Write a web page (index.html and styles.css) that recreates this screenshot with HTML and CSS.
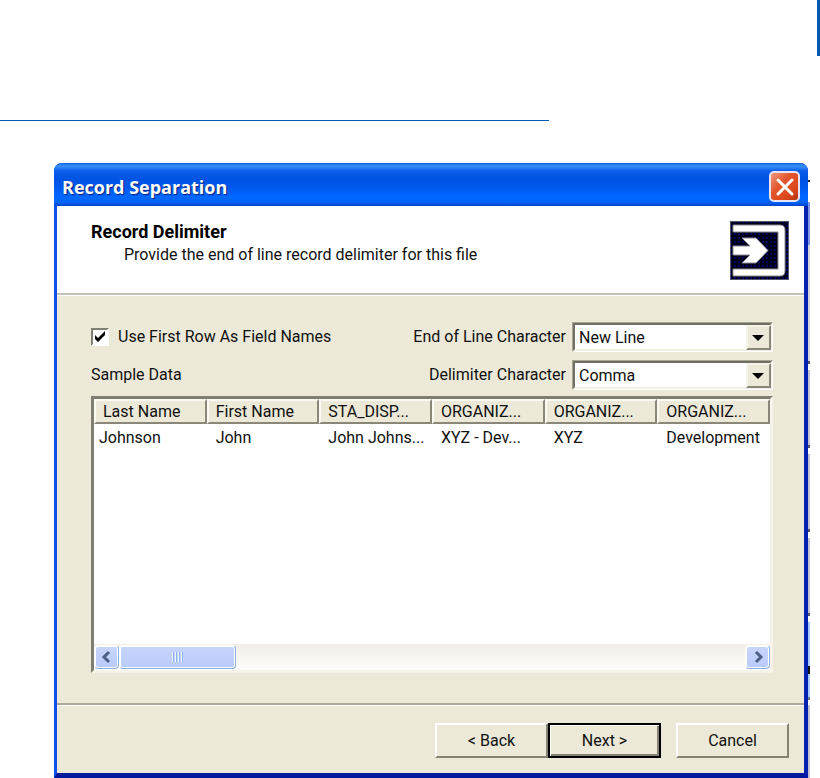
FILE: index.html
```html
<!DOCTYPE html>
<html lang="en">
<head>
  <meta charset="UTF-8">
  <meta name="viewport" content="width=device-width, initial-scale=1.0">
  <title>Record Separation</title>
  <link rel="stylesheet" href="styles.css">
</head>
<body>
  <header class="page-header"></header>
  <hr class="page-rule">

  <main class="window">
    <div class="titlebar">
      <h1>Record Separation</h1>
      <button class="close" type="button" aria-label="Close">
        <svg viewBox="0 0 24 24" width="24" height="24" aria-hidden="true">
          <path d="M5 5L19 19M19 5L5 19" fill="none" stroke="#fff" stroke-width="3" stroke-linecap="round"/>
        </svg>
      </button>
    </div>

    <form class="dialog">
      <div class="intro">
        <div class="intro-text">
          <h2>Record Delimiter</h2>
          <p>Provide the end of line record delimiter for this file</p>
        </div>
        <svg class="intro-icon" viewBox="0 0 59 59" width="59" height="59" aria-hidden="true">
          <defs>
            <pattern id="dots" width="4" height="4" patternUnits="userSpaceOnUse">
              <rect width="4" height="4" fill="#000018"/>
              <rect width="2" height="2" fill="#00005a"/>
            </pattern>
          </defs>
          <rect width="59" height="59" fill="url(#dots)"/>
          <rect x="0.5" y="0.5" width="58" height="58" fill="none" stroke="#55556a"/>
          <path d="M3 4H50Q55 4 55 9V50Q55 55 50 55H3V48H48V11H3Z" fill="#fff" stroke="#8a8a94"/>
          <path d="M3 25H20L12 17H26L38 29.500L26 42H12L20 34H3Z" fill="#fff" stroke="#8a8a94"/>
        </svg>
      </div>

      <div class="content">
        <div class="options">
          <div class="options-left">
            <label class="check"><input type="checkbox" checked> Use First Row As Field Names</label>
            <span id="sample-label">Sample Data</span>
          </div>
          <div class="options-right">
            <div class="field">
              <label for="eol">End of Line Character</label>
              <div class="combo">
                <select id="eol"><option>New Line</option></select>
              </div>
            </div>
            <div class="field">
              <label for="delimiter">Delimiter Character</label>
              <div class="combo">
                <select id="delimiter"><option>Comma</option></select>
              </div>
            </div>
          </div>
        </div>

        <div class="list">
          <table aria-labelledby="sample-label">
            <thead>
              <tr>
                <th>Last Name</th>
                <th>First Name</th>
                <th>STA_DISP...</th>
                <th>ORGANIZ...</th>
                <th>ORGANIZ...</th>
                <th>ORGANIZ...</th>
              </tr>
            </thead>
            <tbody>
              <tr>
                <td>Johnson</td>
                <td>John</td>
                <td>John Johns...</td>
                <td>XYZ - Dev...</td>
                <td>XYZ</td>
                <td>Development</td>
              </tr>
            </tbody>
          </table>
          <div class="scrollbar">
            <button class="scroll-btn" type="button" aria-label="Scroll left">
              <svg viewBox="0 0 12 14" width="12" height="14" aria-hidden="true"><path d="M8 2L3 7L8 12" fill="none" stroke="#4d6185" stroke-width="3"/></svg>
            </button>
            <div class="thumb"><span class="grip"></span></div>
            <button class="scroll-btn scroll-right" type="button" aria-label="Scroll right">
              <svg viewBox="0 0 12 14" width="12" height="14" aria-hidden="true"><path d="M4 2L9 7L4 12" fill="none" stroke="#4d6185" stroke-width="3"/></svg>
            </button>
          </div>
        </div>
      </div>

      <div class="buttons">
        <button class="btn" type="button">&lt; Back</button>
        <button class="btn btn-default" type="submit">Next &gt;</button>
        <button class="btn btn-cancel" type="button">Cancel</button>
      </div>
    </form>
  </main>
</body>
</html>
```

FILE: styles.css
```css
*,
*::before,
*::after {
  box-sizing: border-box;
}
body {
  margin: 0;
  background: #fff;
  color: #111;
  font-family: Roboto, "Liberation Sans", sans-serif;
  font-size: 16px;
  line-height: 20px;
}
button,
select,
input {
  font: inherit;
  color: inherit;
}
.page-header {
  height: 56px;
  border-right: 3px solid #0059b3;
}
.page-rule {
  width: 67%;
  height: 1px;
  margin: 64px 0 0;
  border: 0;
  background: #0059b3;
}

/* Window frame */
.window {
  position: relative;
  margin: 42px 12px 0 54px;
  border: solid;
  border-width: 0 4px 5px 3px;
  border-color: #0020b0 #0020b0 #001a9e #1050e8;
  border-radius: 8px 8px 0 0;
}
/* Sliver of the window behind this one */
.window::after {
  content: "";
  position: absolute;
  top: 17px;
  right: -6px;
  bottom: -5px;
  width: 2px;
  background: linear-gradient(#222 0 2px, #fff 2px 22px, #7f97e8 22px 65px, #d4d3dc 65px 181px, #55556a 181px 184px, #fff 184px 190px, #c4c2d2 190px 265px, #55556a 265px 268px, #fff 268px 274px, #c4c2d2 274px 349px, #55556a 349px 352px, #fff 352px 358px, #c4c2d2 358px 433px, #55556a 433px 436px, #fff 436px 442px, #a9c8fa 442px 486px, #111 486px 494px, #a9c8fa 494px 517px, #77778a 517px 520px, #fff 520px 525px, #c4c2d2 525px);
}
.titlebar {
  display: flex;
  align-items: center;
  justify-content: space-between;
  height: 43px;
  margin: 0 -4px 0 -3px;
  padding: 4px 8px 0;
  border-radius: 8px 8px 0 0;
  background: linear-gradient(#0a5fe0, #3c92ff 3px, #0a5cea 8px, #0054e3 16px, #0058ee 24px, #0068ff 34px, #0066fb 39px, #0044cc 43px);
}
.titlebar h1 {
  margin: 0;
  color: #fff;
  font-family: "Open Sans", "Noto Sans", sans-serif;
  font-size: 18px;
  font-weight: 700;
  text-shadow: 1px 1px 1px #0a1f80;
}
.close {
  display: flex;
  align-items: center;
  justify-content: center;
  width: 31px;
  height: 31px;
  padding: 0;
  border: 2px solid #e8e4f4;
  border-radius: 5px;
  background: linear-gradient(135deg, #f0987c, #e2542c 40%, #dd4a1c 70%, #b8330c);
}

/* Wizard header */
.dialog {
  background: #ece9d8;
}
.intro {
  display: flex;
  justify-content: space-between;
  height: 89px;
  padding: 15px 15px 0 34px;
  background: #fff;
  border-bottom: 2px solid #c4c2b5;
}
.intro h2,
.intro p {
  margin: 0;
}
.intro h2 {
  color: #000;
  font-size: 18px;
  font-weight: 700;
  line-height: 22px;
}
.intro p {
  padding-left: 33px;
  line-height: 24px;
}

/* Options */
.content {
  padding: 26px 31px 30px 34px;
  border-top: 1px solid #fff;
}
.options {
  display: flex;
  justify-content: space-between;
  margin-bottom: 6px;
}
.options-left {
  display: flex;
  flex-direction: column;
  gap: 18px;
  padding-top: 5px;
}
.check {
  display: flex;
  align-items: center;
  gap: 9px;
}
.check input {
  appearance: none;
  width: 18px;
  height: 18px;
  margin: 0;
  border: 2px solid;
  border-color: #808074 #fff #fff #808074;
  background: #fff;
}
.check input:checked {
  background: #fff url("data:image/svg+xml,%3Csvg xmlns='http://www.w3.org/2000/svg' viewBox='0 0 14 14'%3E%3Cpath d='M2 5L5 8L12 1V5L5 12L2 9Z' fill='%23000'/%3E%3C/svg%3E") center / 14px 14px no-repeat;
}
.options-right {
  display: flex;
  flex-direction: column;
  gap: 8px;
}
.field {
  display: flex;
  justify-content: flex-end;
  align-items: center;
  gap: 6px;
}
.combo {
  position: relative;
  width: 201px;
  border: 1px solid;
  border-color: #a5a392 #fff #fff #a5a392;
}
.combo select {
  display: block;
  appearance: none;
  width: 100%;
  height: 28px;
  padding: 2px 28px 0 4px;
  border: 2px solid;
  border-color: #716f64 #f1efe2 #f1efe2 #716f64;
  border-radius: 0;
  background: #fff;
}
.combo::before {
  content: "";
  position: absolute;
  top: 2px;
  right: 1px;
  width: 25px;
  height: 25px;
  border: 2px solid;
  border-color: #f6f4e8 #8a8778 #8a8778 #f6f4e8;
  background: #ece9d8;
  pointer-events: none;
}
.combo::after {
  content: "";
  position: absolute;
  top: 12px;
  right: 8px;
  border: 6px solid transparent;
  border-top-color: #000;
  border-bottom: 0;
  pointer-events: none;
}

/* Sample data list */
.list {
  display: flex;
  flex-direction: column;
  height: 277px;
  border: 3px solid;
  border-color: #807e70 #f6f4ea #f6f4ea #807e70;
  background: #fff;
}
table {
  width: 100%;
  table-layout: fixed;
  border-collapse: separate;
  border-spacing: 0;
}
th,
td {
  overflow: hidden;
  padding: 0 0 0 9px;
  font-weight: 400;
  text-align: left;
  white-space: nowrap;
}
th {
  height: 25px;
  padding-left: 7px;
  border: 2px solid;
  border-color: #fbfaf2 #8a8778 #8a8778 #fbfaf2;
  background: #ece9d8;
}
td {
  height: 28px;
}
td:first-child {
  padding-left: 5px;
}
.scrollbar {
  display: flex;
  height: 26px;
  margin-top: auto;
  padding: 1px 0;
  background: linear-gradient(#f0eee6, #fefefb);
}
.scroll-btn,
.thumb {
  display: flex;
  align-items: center;
  justify-content: center;
  height: 24px;
  padding: 0;
  border: 1px solid;
  border-color: #fff #8fafdf #8fafdf #fff;
  border-radius: 4px;
  background: linear-gradient(#c8d6fb, #b9cbfa);
  box-shadow: inset 0 0 0 1px #fff;
}
.scroll-btn {
  width: 25px;
}
.scroll-right {
  margin-left: auto;
}
.thumb {
  width: 117px;
}
.grip {
  width: 12px;
  height: 10px;
  background: repeating-linear-gradient(to right, #eef4fe 0 1px, #8cb0f8 1px 2px, #c4d3fc 2px 3px);
}

/* Footer buttons */
.buttons {
  display: flex;
  justify-content: flex-end;
  padding: 18px 15px 15px;
  border-top: 2px solid #aca899;
  box-shadow: inset 0 1px #fff;
}
.btn {
  width: 113px;
  height: 35px;
  padding: 0;
  border: 2px solid;
  border-color: #fff #858274 #858274 #fff;
  border-radius: 0;
  background: #ece9d8;
}
.btn-default {
  border: 2px solid #000;
  box-shadow: inset 1px 1px #fff, inset -2px -2px #858274;
}
.btn-cancel {
  margin-left: 15px;
}
```
